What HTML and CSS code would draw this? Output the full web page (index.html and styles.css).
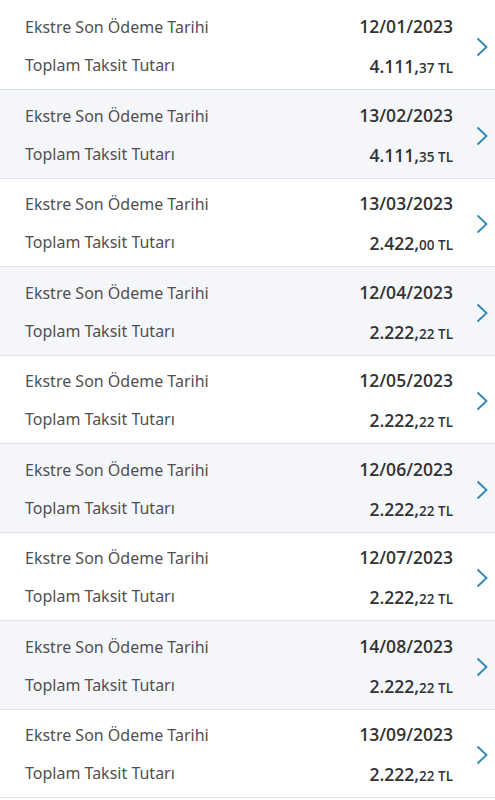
FILE: index.html
```html
<!DOCTYPE html>
<html lang="tr">
<head>
<meta charset="utf-8">
<link rel="stylesheet" href="styles.css">
</head>
<body>
<div class="list">
  <div class="row">
    <div class="labels"><div class="lbl">Ekstre Son Ödeme Tarihi</div><div class="lbl">Toplam Taksit Tutarı</div></div>
    <div class="vals"><div class="date">12/01/2023</div><div class="amt">4.111,<span class="small">37 TL</span></div></div>
    <svg class="chev" viewBox="0 0 12 20"><path d="M1.5 1.5 L10.5 10 L1.5 18.5"/></svg>
  </div>
  <div class="row alt">
    <div class="labels"><div class="lbl">Ekstre Son Ödeme Tarihi</div><div class="lbl">Toplam Taksit Tutarı</div></div>
    <div class="vals"><div class="date">13/02/2023</div><div class="amt">4.111,<span class="small">35 TL</span></div></div>
    <svg class="chev" viewBox="0 0 12 20"><path d="M1.5 1.5 L10.5 10 L1.5 18.5"/></svg>
  </div>
  <div class="row">
    <div class="labels"><div class="lbl">Ekstre Son Ödeme Tarihi</div><div class="lbl">Toplam Taksit Tutarı</div></div>
    <div class="vals"><div class="date">13/03/2023</div><div class="amt">2.422,<span class="small">00 TL</span></div></div>
    <svg class="chev" viewBox="0 0 12 20"><path d="M1.5 1.5 L10.5 10 L1.5 18.5"/></svg>
  </div>
  <div class="row alt">
    <div class="labels"><div class="lbl">Ekstre Son Ödeme Tarihi</div><div class="lbl">Toplam Taksit Tutarı</div></div>
    <div class="vals"><div class="date">12/04/2023</div><div class="amt">2.222,<span class="small">22 TL</span></div></div>
    <svg class="chev" viewBox="0 0 12 20"><path d="M1.5 1.5 L10.5 10 L1.5 18.5"/></svg>
  </div>
  <div class="row">
    <div class="labels"><div class="lbl">Ekstre Son Ödeme Tarihi</div><div class="lbl">Toplam Taksit Tutarı</div></div>
    <div class="vals"><div class="date">12/05/2023</div><div class="amt">2.222,<span class="small">22 TL</span></div></div>
    <svg class="chev" viewBox="0 0 12 20"><path d="M1.5 1.5 L10.5 10 L1.5 18.5"/></svg>
  </div>
  <div class="row alt">
    <div class="labels"><div class="lbl">Ekstre Son Ödeme Tarihi</div><div class="lbl">Toplam Taksit Tutarı</div></div>
    <div class="vals"><div class="date">12/06/2023</div><div class="amt">2.222,<span class="small">22 TL</span></div></div>
    <svg class="chev" viewBox="0 0 12 20"><path d="M1.5 1.5 L10.5 10 L1.5 18.5"/></svg>
  </div>
  <div class="row">
    <div class="labels"><div class="lbl">Ekstre Son Ödeme Tarihi</div><div class="lbl">Toplam Taksit Tutarı</div></div>
    <div class="vals"><div class="date">12/07/2023</div><div class="amt">2.222,<span class="small">22 TL</span></div></div>
    <svg class="chev" viewBox="0 0 12 20"><path d="M1.5 1.5 L10.5 10 L1.5 18.5"/></svg>
  </div>
  <div class="row alt">
    <div class="labels"><div class="lbl">Ekstre Son Ödeme Tarihi</div><div class="lbl">Toplam Taksit Tutarı</div></div>
    <div class="vals"><div class="date">14/08/2023</div><div class="amt">2.222,<span class="small">22 TL</span></div></div>
    <svg class="chev" viewBox="0 0 12 20"><path d="M1.5 1.5 L10.5 10 L1.5 18.5"/></svg>
  </div>
  <div class="row">
    <div class="labels"><div class="lbl">Ekstre Son Ödeme Tarihi</div><div class="lbl">Toplam Taksit Tutarı</div></div>
    <div class="vals"><div class="date">13/09/2023</div><div class="amt">2.222,<span class="small">22 TL</span></div></div>
    <svg class="chev" viewBox="0 0 12 20"><path d="M1.5 1.5 L10.5 10 L1.5 18.5"/></svg>
  </div>
</div>
</body>
</html>
```
FILE: styles.css
```css
html, body { margin: 0; padding: 0; background: #fff; }
body { font-family: "Noto Sans", "Open Sans", sans-serif; }
.list { padding-top: 1.5px; }
.row {
  height: 88.5px;
  box-sizing: border-box;
  border-bottom: 1px solid #dde2ea;
  display: flex;
  align-items: center;
  padding: 0 7px 0 25px;
  background: #fff;
}
.row.alt { background: #f4f6fa; }
.labels { flex: 1; display: flex; flex-direction: column; gap: 16px; margin-top: 2px; }
.lbl { font-size: 16px; line-height: 22px; color: #505050; font-weight: 400; }
.vals { display: flex; flex-direction: column; align-items: flex-end; gap: 18px; margin-top: 4px; }
.date { font-family: "Open Sans", sans-serif; font-weight: 600; font-size: 17.5px; line-height: 22px; color: #333; }
.amt { font-family: "Open Sans", sans-serif; font-weight: 600; font-size: 17.5px; line-height: 22px; color: #333; }
.small { font-size: 13.5px; }
.chev { width: 12px; height: 20px; margin-left: 23px; margin-top: 4px; fill: none; stroke: #2b87b5; stroke-width: 1.8; }
```
